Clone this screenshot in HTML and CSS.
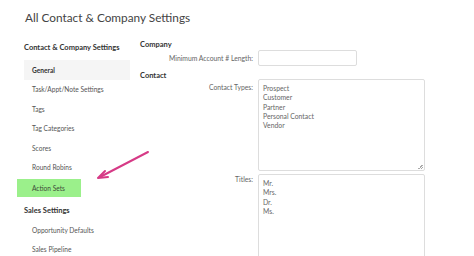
FILE: index.html
```html
<!DOCTYPE html>
<html>
<head>
<meta charset="utf-8">
<link rel="stylesheet" href="styles.css">
</head>
<body>
<div class="page">
  <h1 class="title">All Contact &amp; Company Settings</h1>
  <div class="layout">
    <nav class="sidebar">
      <div class="group-title first">Contact &amp; Company Settings</div>
      <div class="item active">General</div>
      <div class="item">Task/Appt/Note Settings</div>
      <div class="item">Tags</div>
      <div class="item">Tag Categories</div>
      <div class="item">Scores</div>
      <div class="item">Round Robins</div>
      <div class="item highlight">Action Sets</div>
      <div class="group-title second">Sales Settings</div>
      <div class="item">Opportunity Defaults</div>
      <div class="item">Sales Pipeline</div>
    </nav>
    <main class="main">
      <div class="section-title">Company</div>
      <div class="row row-input">
        <label class="label">Minimum Account # Length:</label>
        <div class="input"></div>
      </div>
      <div class="section-title contact">Contact</div>
      <div class="row">
        <label class="label">Contact Types:</label>
        <div class="textarea types">
          <div>Prospect</div>
          <div>Customer</div>
          <div>Partner</div>
          <div>Personal Contact</div>
          <div>Vendor</div>
          <span class="grip"></span>
        </div>
      </div>
      <div class="row">
        <label class="label">Titles:</label>
        <div class="textarea titles">
          <div>Mr.</div>
          <div>Mrs.</div>
          <div>Dr.</div>
          <div>Ms.</div>
        </div>
      </div>
    </main>
  </div>
  <svg class="arrow" width="474" height="256" viewBox="0 0 474 256">
    <line x1="148" y1="152" x2="100" y2="177" stroke="#d63a86" stroke-width="2" stroke-linecap="round"/>
    <path d="M98 178 L105 171 M98 178 L108 177" stroke="#d63a86" stroke-width="2" stroke-linecap="round" fill="none"/>
  </svg>
</div>
</body>
</html>
```

FILE: styles.css
```css
* { box-sizing: border-box; margin: 0; padding: 0; }
html, body { width: 474px; height: 256px; overflow: hidden; background: #fff; }
body { font-family: Lato, "Open Sans", sans-serif; color: #555; }
.page { position: relative; width: 474px; height: 256px; overflow: hidden; }
.title {
  font-weight: 400;
  font-size: 11.8px;
  color: #444;
  padding: 10px 0 0 25px;
  height: 38px;
  line-height: 16px;
}
.layout { display: flex; }
.sidebar { width: 140px; padding-left: 24px; display: flex; flex-direction: column; }
.group-title { font-size: 7.5px; font-weight: 700; color: #333; line-height: 10px; }
.group-title.first { height: 22px; padding-top: 5px; }
.group-title.second { height: 23px; padding-top: 8px; margin-top: 1px; }
.item {
  font-size: 6.6px;
  color: #555;
  height: 19.5px;
  line-height: 19.5px;
  padding-left: 8px;
  width: 106px;
}
.item.active { background: #f5f5f5; font-weight: 700; color: #333; height: 20px; line-height: 20px; }
.item.highlight {
  background: #9bf08b;
  margin-left: -7px;
  padding-left: 15px;
  width: 64px;
  height: 18px;
  line-height: 18px;
  margin-top: 1px;
  color: #3d4a3a;
}
.main { flex: 1; display: flex; flex-direction: column; }
.section-title { font-size: 7.5px; font-weight: 700; color: #333; line-height: 10px; margin-top: 2px; height: 9px; }
.section-title.contact { margin-top: 5px; height: 8px; }
.row { display: flex; gap: 5px; }
.row-input { margin-top: 1px; }
.label { width: 113px; text-align: right; font-size: 6.8px; color: #666; line-height: 12px; padding-top: 2px; }
.input { width: 99px; height: 16px; border: 1px solid #ddd; border-radius: 2px; background: #fff; }
.textarea {
  position: relative;
  width: 167px;
  border: 1px solid #ddd;
  border-radius: 2px;
  padding: 4px 4px;
  font-size: 6.8px;
  color: #666;
  line-height: 9.3px;
}
.types { height: 92px; margin-top: 0; }
.titles { height: 90px; margin-top: 3px; }
.grip {
  position: absolute; right: 1px; bottom: 1px; width: 5px; height: 5px;
  background: linear-gradient(135deg, transparent 50%, #aaa 50%, #aaa 62%, transparent 62%, transparent 75%, #aaa 75%, #aaa 87%, transparent 87%);
}
.arrow { position: absolute; left: 0; top: 0; pointer-events: none; }
```
